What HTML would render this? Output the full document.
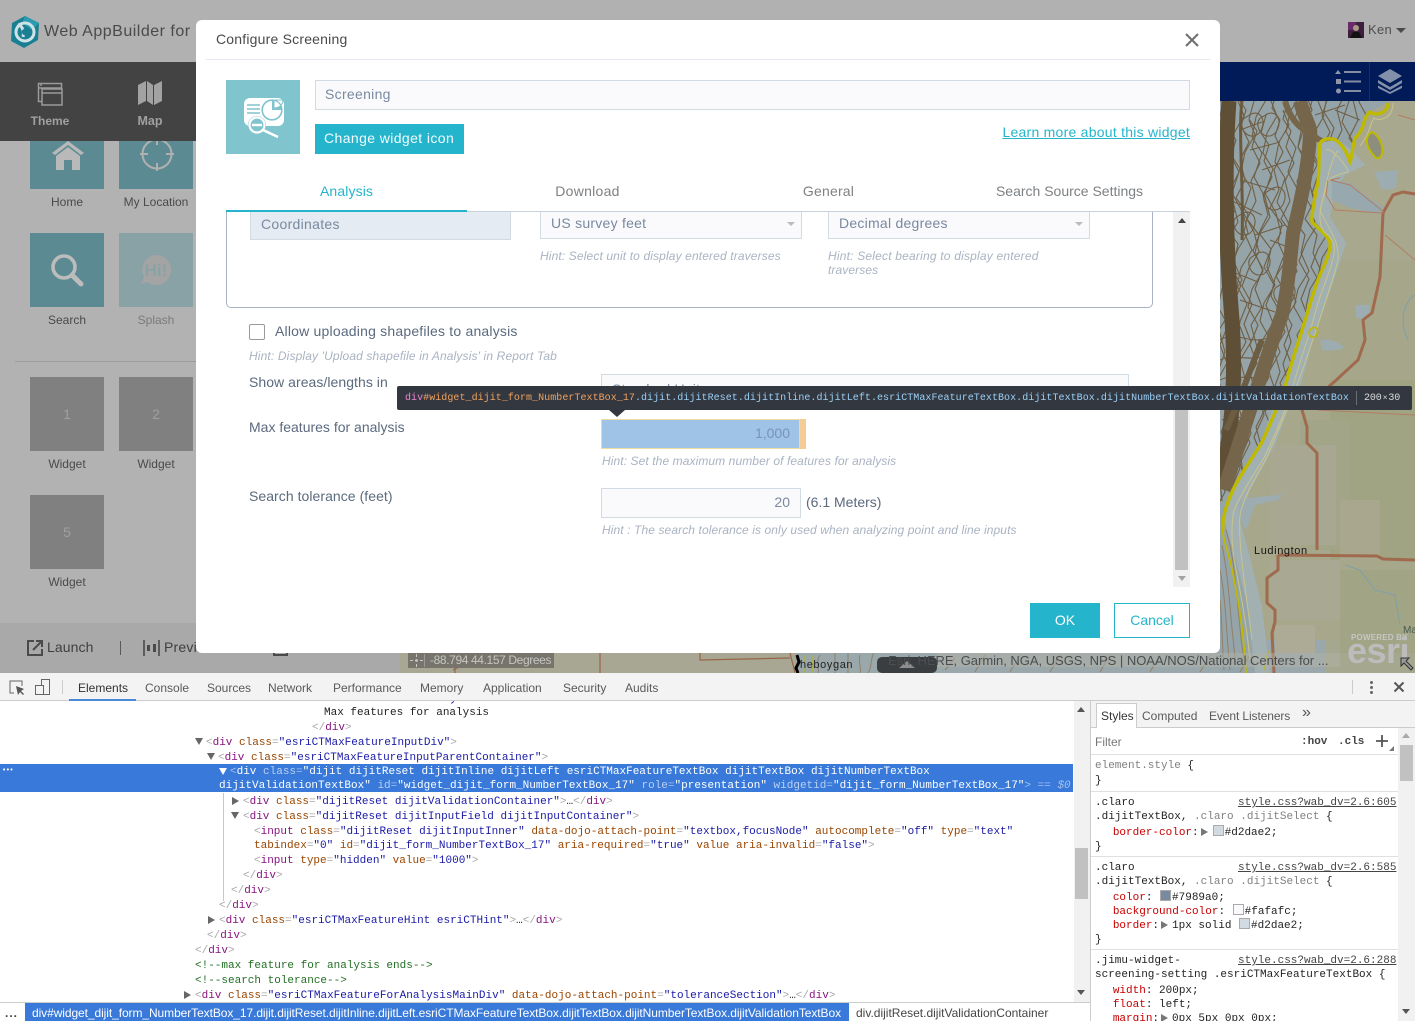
<!DOCTYPE html>
<html><head><meta charset="utf-8"><title>Configure Screening</title>
<style>
html,body{margin:0;padding:0;width:1415px;height:1021px;overflow:hidden;background:#fff;font-family:"Liberation Sans",sans-serif}
.a{position:absolute}
.t{position:absolute;white-space:nowrap;line-height:16px;height:16px}
#page{position:absolute;left:0;top:0;width:1415px;height:1021px;overflow:hidden}
.tile{position:absolute;width:74px;height:74px;display:flex;align-items:center;justify-content:center}
.lb{position:absolute;white-space:nowrap;line-height:16px;font-size:12px;color:#4a4a4a;text-align:center;width:90px}
.d{color:#5b6a7e;font-size:14px;letter-spacing:0}
.h{color:#a9b3c2;font-size:12px;font-style:italic;letter-spacing:.1px}
.box{position:absolute;background:#fafafc;border:1px solid #d2dae2;box-sizing:border-box}
.tab{position:absolute;top:183px;width:241px;text-align:center;font-size:14px;color:#7d8184;line-height:16px;letter-spacing:.2px}
.m{position:absolute;white-space:pre;font-family:"Liberation Mono",monospace;font-size:11px;line-height:15px;height:15px;color:#222;margin-top:2px}
.b{color:#a8a8a8}.g{color:#881280}.n{color:#994500}.v{color:#1a1aa6}.c{color:#236e25}
.sel{color:#fff}.sel .b{color:#a5c1ee}.sel .g{color:#fff}.sel .n{color:#bcd0f0}.sel .v{color:#fff}
.ar{position:absolute;width:0;height:0}
.ad{border-left:4px solid transparent;border-right:4px solid transparent;border-top:7px solid #666;margin-top:1px}
.ag{border-top:4px solid transparent;border-bottom:4px solid transparent;border-left:7px solid #666;margin-top:1px}
.dt{position:absolute;top:680px;font-size:12px;line-height:16px;color:#5a5a5a;white-space:nowrap}
.s{position:absolute;white-space:pre;font-family:"Liberation Mono",monospace;font-size:11px;line-height:14px;height:14px;color:#222;left:1095px;margin-top:2px}
.r{color:#c80000;margin-left:-2px}.gr{color:#808080}
.lk{position:absolute;left:1238px;white-space:pre;font-family:"Liberation Mono",monospace;font-size:11px;line-height:14px;color:#444;text-decoration:underline;margin-top:2px}
.sw{display:inline-block;width:9px;height:9px;border:1px solid #aaa;vertical-align:-1px;margin:0 1px 0 1px}
.tri{display:inline-block;width:0;height:0;border-top:4px solid transparent;border-bottom:4px solid transparent;border-left:7px solid #777;margin:0 4px 0 2px;vertical-align:-1px}
</style></head><body>
<div id="page">

<!-- app header -->
<div class="a" style="left:0;top:0;width:1415px;height:62px;background:#b1b1b1"></div>
<svg class="a" style="left:10px;top:15px" width="30" height="34" viewBox="0 0 30 34">
<path d="M15 1 L29 8 L28 25 L14 33 L1 26 L2 8 Z" fill="#1b7f93"/>
<path d="M15 1 L29 8 L22 15 L12 8 Z" fill="#2a9bb0"/>
<circle cx="15" cy="17" r="9" fill="none" stroke="#cfe3e6" stroke-width="3"/>
<path d="M8 9 Q15 13 13 22" fill="none" stroke="#cfe3e6" stroke-width="3"/>
<circle cx="15" cy="17" r="3.2" fill="#1b7f93"/>
</svg>
<div class="t" style="left:44px;top:23px;font-size:16px;letter-spacing:.5px;color:#4a4a4a;height:18px;line-height:18px">Web AppBuilder for .</div>
<svg class="a" style="left:1348px;top:22px" width="16" height="16"><rect width="16" height="16" fill="#3d1f3d"/><rect x="0" y="0" width="8" height="8" fill="#6a2a6a"/><circle cx="8" cy="6" r="3" fill="#a98"/><path d="M2 16 L5 10 H11 L14 16Z" fill="#111"/></svg>
<div class="t" style="left:1368px;top:22px;font-size:13px;color:#4e4e4e;letter-spacing:.3px">Ken</div>
<div class="ar" style="left:1396px;top:28px;border-left:5px solid transparent;border-right:5px solid transparent;border-top:5px solid #4a4a4a"></div>

<!-- left panel -->
<div class="a" style="left:0;top:62px;width:196px;height:562px;background:#b2b2b2"></div>
<div class="tile" style="left:30px;top:115px;background:#5c8a92"></div>
<div class="tile" style="left:119px;top:115px;background:#5c8a92"></div>
<svg class="a" style="left:50px;top:138px" width="36" height="34"><path d="M18 3 L2 15 L5 17 L18 7 L31 17 L34 15Z" fill="#b9b9b9"/><path d="M6 18 L18 9 L30 18 V32 H22 V22 H14 V32 H6Z" fill="#b9b9b9"/></svg>
<svg class="a" style="left:139px;top:136px" width="36" height="36"><circle cx="18" cy="18" r="14.5" fill="none" stroke="#b0b0b0" stroke-width="2"/><path d="M18 1V9M18 27V35M1 18H9M27 18H35" stroke="#b0b0b0" stroke-width="2"/></svg>
<div class="lb" style="left:22px;top:194px">Home</div>
<div class="lb" style="left:111px;top:194px">My Location</div>
<div class="tile" style="left:30px;top:233px;background:#5c8a92"><svg width="36" height="36" viewBox="0 0 36 36"><circle cx="15" cy="15" r="11" fill="none" stroke="#bcbcbc" stroke-width="3.6"/><path d="M23 23 L32 32" stroke="#bcbcbc" stroke-width="5" stroke-linecap="round"/></svg></div>
<div class="tile" style="left:119px;top:233px;background:#88a2a5"><svg width="36" height="36" viewBox="0 0 36 36"><path d="M18 3a15 15 0 1 1-9 27L3 32l3-7A15 15 0 0 1 18 3Z" fill="#a4a4a4"/><text x="18" y="24" font-size="17" font-weight="bold" text-anchor="middle" fill="#88a2a5" font-family="Liberation Sans">Hi!</text></svg></div>
<div class="lb" style="left:22px;top:312px">Search</div>
<div class="lb" style="left:111px;top:312px;color:#7a7a7a">Splash</div>
<div class="a" style="left:15px;top:361px;width:181px;height:1px;background:#9c9c9c"></div>
<div class="tile" style="left:30px;top:377px;background:#808080;color:#a0a0a0;font-size:14px">1</div>
<div class="tile" style="left:119px;top:377px;background:#808080;color:#a0a0a0;font-size:14px">2</div>
<div class="tile" style="left:30px;top:495px;background:#808080;color:#a0a0a0;font-size:14px">5</div>
<div class="lb" style="left:22px;top:456px">Widget</div>
<div class="lb" style="left:111px;top:456px">Widget</div>
<div class="lb" style="left:22px;top:574px">Widget</div>

<!-- dark bar -->
<div class="a" style="left:0;top:62px;width:196px;height:79px;background:#434343"></div>
<svg class="a" style="left:37px;top:82px" width="26" height="24"><rect x="1.5" y="1.5" width="23" height="18" fill="none" stroke="#9a9a9a" stroke-width="1.5"/><path d="M4 1 V4 M1 6H25" stroke="#9a9a9a" stroke-width="1.5"/><rect x="5" y="7" width="20" height="16" fill="#434343" stroke="#9a9a9a" stroke-width="1.5"/><path d="M5 11H25" stroke="#9a9a9a" stroke-width="1.5"/></svg>
<svg class="a" style="left:137px;top:80px" width="26" height="26"><path d="M1 5 L9 1 V21 L1 25Z M10 1 L16 5 V25 L10 21Z M17 5 L25 1 V21 L17 25Z" fill="#a2a2a2"/></svg>
<div class="t" style="left:10px;top:113px;width:80px;text-align:center;font-size:12px;font-weight:bold;color:#a0a0a0">Theme</div>
<div class="t" style="left:110px;top:113px;width:80px;text-align:center;font-size:12.5px;font-weight:bold;color:#a0a0a0">Map</div>

<!-- bottom bar -->
<div class="a" style="left:0;top:623px;width:400px;height:50px;background:#a9a9a9"></div>
<svg class="a" style="left:26px;top:639px" width="18" height="18"><path d="M8 2H2V16H16V10" fill="none" stroke="#4a4a4a" stroke-width="2"/><path d="M7 11L15 3M10 2H16V8" fill="none" stroke="#4a4a4a" stroke-width="2"/></svg>
<div class="t" style="left:47px;top:639px;font-size:14px;color:#3f3f3f;letter-spacing:.1px">Launch</div>
<div class="a" style="left:120px;top:641px;width:1px;height:14px;background:#5a5a5a"></div>
<svg class="a" style="left:143px;top:640px" width="18" height="16"><path d="M1 0V16M16 0V16" stroke="#4a4a4a" stroke-width="1.6"/><rect x="4" y="5" width="3" height="6" fill="#4a4a4a"/><rect x="10" y="4" width="3" height="8" fill="#4a4a4a"/></svg>
<div class="t" style="left:164px;top:639px;font-size:14px;color:#3f3f3f;letter-spacing:.2px">Preview</div>
<div class="a" style="left:273px;top:648px;width:15px;height:8px;border:2px solid #4a4a4a;box-sizing:border-box"></div>

<!-- navy bar -->
<div class="a" style="left:1220px;top:62px;width:195px;height:39px;background:#001b58"></div>
<svg class="a" style="left:1335px;top:68px" width="30" height="28"><path d="M3 2 L6 6 H0Z" fill="#8f96a9"/><path d="M9 4H26M9 13.500H26M9 23H26" stroke="#858da3" stroke-width="2"/><rect x="1" y="11" width="5" height="5" fill="#8f96a9"/><circle cx="3.500" cy="23" r="2.500" fill="#8f96a9"/></svg>
<div class="a" style="left:1369px;top:62px;width:1px;height:39px;background:#12306b"></div>
<svg class="a" style="left:1377px;top:68px" width="26" height="26"><path d="M13 1 L25 8 L13 15 L1 8Z" fill="#8390a9"/><path d="M1 12 L13 19 L25 12 V15 L13 22 L1 15Z" fill="#8390a9"/><path d="M1 17.500 L13 24 L25 17.500 V20 L13 26 L1 20Z" fill="#8390a9"/></svg>

<!-- map -->
<svg class="a" style="left:400px;top:101px" width="1015" height="572" viewBox="400 101 1015 572">
<defs>
<clipPath id="wz"><path d="M1220 101 H1390 L1370 112 L1352 150 L1337 140 L1320 142 L1318 187 L1313 217 L1331 243 L1320 277 L1300 333 L1283 395 L1272 410 L1260 445 L1233 490 L1222 520 H1220Z"/></clipPath>
<path id="cA" d="M0 0 L-5 18 L3 30 L-2 46 L6 62 L-3 80 L2 100 L-7 118 L5 134 L1 152 L9 170 L-2 188 L-6 206 L4 224 L-4 244 L3 262 L-8 282 L-2 300 L-12 322 L-4 342 L-14 362 L-8 382 L-18 400"/>
<path id="cB" d="M0 0 L6 15 L-4 32 L-8 52 L2 68 L-6 92 L5 112 L10 132 L0 148 L-7 166 L3 184 L-5 204 L2 222 L-9 240 L-3 262 L-11 284 L-5 306 L-15 326 L-9 348 L-19 372 L-16 400"/>
<path id="cC" d="M0 0 C10 -8 18 2 14 12 C10 24 -4 22 -6 10 C-7 4 -4 2 0 0Z"/>
</defs>
<rect x="400" y="101" width="1015" height="572" fill="#a6a78b"/>
<!-- bottom strip left tan -->
<rect x="400" y="640" width="395" height="40" fill="#a8a794"/>
<path d="M455 653 L455 673M453 670Q490 650 530 660M600 653V673M700 653V660L790 658 M790 653L795 673" stroke="#9a6448" stroke-width="1.2" fill="none"/>
<!-- bottom strip water -->
<rect x="795" y="640" width="530" height="40" fill="#9aa8ab"/>
<rect x="1325" y="640" width="90" height="40" fill="#a6a78f"/>
<!-- land patches -->
<rect x="1330" y="101" width="85" height="160" fill="#a8a88f"/>
<rect x="1330" y="260" width="85" height="120" fill="#a6a78a"/>
<rect x="1330" y="380" width="85" height="180" fill="#a0a483"/>
<rect x="1300" y="420" width="50" height="130" fill="#a3a589"/>
<rect x="1270" y="445" width="66" height="100" fill="#a8a892"/>
<rect x="1340" y="500" width="40" height="60" fill="#a9a88f"/>
<rect x="1270" y="560" width="70" height="60" fill="#a9a893"/>
<rect x="1340" y="570" width="75" height="83" fill="#a1a585"/>
<rect x="1275" y="625" width="40" height="28" fill="#adab96"/>
<!-- water west of shoreline -->
<path d="M1220 101 H1390 L1370 112 L1352 150 L1337 140 L1320 142 L1318 187 L1313 217 L1331 243 L1320 277 L1300 333 L1283 395 L1272 410 L1260 445 L1233 490 L1224 520 L1235 557 L1248 607 L1255 673 H1220Z" fill="#95a4a9"/>
<path d="M1352 150 L1337 140 L1320 142 L1318 187 L1313 217 L1331 243 L1320 277 L1300 333 L1283 395 L1272 410 L1260 445 L1233 490 L1224 520 L1235 557 L1248 607 L1255 673 L1270 673 L1262 607 L1250 557 L1240 520 L1250 490 L1275 445 L1288 410 L1298 395 L1315 333 L1335 277 L1346 243 L1330 217 L1335 190 L1345 175 L1365 165Z" fill="#a2b0b2"/>
<!-- lakes -->
<path d="M1332 180 L1350 183 L1372 200 L1384 208 L1378 214 L1350 208 L1332 200Z" fill="#97a8ae"/>
<path d="M1374 172 L1398 170 L1396 188 L1382 190Z" fill="#9cacb1"/>
<path d="M1240 500 L1255 497 L1280 495 L1285 490 L1278 500 L1255 505 L1248 525 L1246 530 L1238 515Z" fill="#9cacb1"/>
<path d="M1355 305 L1370 305 L1368 320 L1356 318Z" fill="#9cacb1"/>
<path d="M1320 340 Q1335 338 1345 348 Q1332 352 1322 350Z" fill="#9cacb1"/>
<!-- dense contours -->
<g clip-path="url(#wz)" fill="none" stroke="#6f5f44" stroke-width="1.1" stroke-linejoin="round">
<use href="#cA" x="1224" y="101"/><use href="#cB" x="1228" y="90"/><use href="#cA" x="1233" y="110"/><use href="#cB" x="1238" y="101"/>
<use href="#cA" x="1243" y="80"/><use href="#cB" x="1249" y="120"/><use href="#cA" x="1254" y="101"/><use href="#cB" x="1260" y="85"/>
<use href="#cA" x="1266" y="115"/><use href="#cB" x="1271" y="101"/><use href="#cA" x="1277" y="90"/><use href="#cB" x="1283" y="110"/>
<use href="#cA" x="1288" y="101"/><use href="#cB" x="1294" y="80"/><use href="#cA" x="1300" y="101"/><use href="#cB" x="1306" y="95"/>
<use href="#cA" x="1312" y="101"/><use href="#cB" x="1318" y="101"/><use href="#cA" x="1324" y="70"/><use href="#cB" x="1332" y="60"/>
<use href="#cA" x="1340" y="30"/><use href="#cB" x="1348" y="30"/><use href="#cA" x="1356" y="20"/><use href="#cB" x="1365" y="10"/>
<path d="M1220 340 C1235 330 1250 345 1268 338 M1220 360 C1240 352 1252 365 1272 352 M1220 380 C1236 372 1255 384 1270 372 M1220 400 C1238 392 1248 404 1262 392 M1222 420 C1238 412 1246 424 1256 412 M1222 440 L1248 428 M1222 460 L1240 450 M1240 130 L1262 122 M1262 170 L1290 160 M1230 200 L1262 215 M1270 240 L1295 250 M1228 270 L1258 282 M1335 110 L1360 120 M1315 115 L1345 105 M1250 150 L1280 142 M1240 180 L1275 190 M1255 235 L1285 225 M1240 300 L1275 312"/>
<use href="#cC" x="1248" y="116"/><use href="#cC" x="1264" y="116"/><use href="#cC" x="1270" y="190"/><use href="#cC" x="1255" y="255"/><use href="#cC" x="1240" y="215"/><use href="#cC" x="1280" y="285"/>
</g>
<!-- thick brown bands -->
<g clip-path="url(#wz)" fill="none">
<path d="M1229 101 C1224 170 1226 250 1232 320 C1236 380 1232 430 1222 480" stroke="#5f4f37" stroke-width="15"/>
<path d="M1242 101 C1238 130 1244 190 1242 240" stroke="#6a5a40" stroke-width="3"/>
<path d="M1300 101 C1305 120 1312 128 1310 135 C1308 170 1300 205 1293 233 C1290 260 1288 290 1282 315 C1270 345 1262 375 1250 410 C1240 440 1232 465 1224 490" stroke="#75654a" stroke-width="14"/>
<path d="M1285 101 C1292 125 1304 130 1314 136 C1328 148 1340 142 1350 160" stroke="#76664a" stroke-width="6"/>
<path d="M1262 340 C1250 370 1240 400 1226 430" stroke="#6d5d42" stroke-width="6"/>
</g>
<g fill="none" stroke="#90806a" stroke-width="1">
<path d="M1226 530 C1238 570 1236 610 1244 660 M1222 545 C1230 585 1230 620 1236 665 M1220 570 C1226 600 1226 630 1230 670 M1220 600 C1222 620 1222 640 1224 670"/>
<path d="M820 655 C815 662 820 668 818 673 M835 653 V673 M848 653 V673 M860 655 C858 665 862 668 860 673 M874 652 C870 660 872 668 868 673"/>
<path d="M945 670 L955 658 M975 672 L985 655 M1010 672 L1020 655 M1050 672 L1060 655 M1100 672 L1110 655 M1150 672 L1160 655 M1200 672 L1210 655 M1240 672 L1250 655"/>
</g>
<!-- shoreline yellow -->
<g fill="none">
<path d="M1388 103 C1388 114 1375 116 1370 112 C1362 118 1366 128 1355 138 C1352 148 1352 158 1350 162 C1346 150 1342 145 1336 140 C1330 138 1324 138 1320 143 C1318 165 1320 180 1316 190 C1314 205 1311 215 1312 222 C1322 232 1331 238 1330 246 C1328 262 1320 272 1318 280 C1312 296 1308 312 1302 330 C1296 350 1288 372 1284 392 C1276 410 1272 420 1262 442 C1250 462 1238 478 1232 492 C1226 505 1222 520 1223 530" stroke="#bfb900" stroke-width="3.4"/>
<path d="M1393 103 C1393 118 1380 122 1374 118 C1368 128 1372 130 1360 146 M1326 150 C1330 145 1350 170 1348 172 C1330 176 1326 180 1325 192 C1320 208 1317 222 1324 232 C1336 240 1336 250 1332 262 C1328 278 1322 288 1316 310 C1308 340 1300 360 1292 390 C1284 415 1276 432 1264 458 C1250 480 1240 496 1234 510 C1230 530 1232 550 1236 570 C1240 590 1246 620 1250 660" stroke="#c9c58a" stroke-width="1"/>
<path d="M1338 150 C1328 165 1326 190 1320 210 C1326 225 1340 240 1338 260 C1332 285 1316 330 1306 360 C1298 385 1280 425 1268 455 C1256 478 1244 495 1240 515 C1238 540 1244 580 1252 640" stroke="#c9c58a" stroke-width="1"/>
<path d="M1222 530 C1226 550 1232 562 1236 590 C1240 610 1244 640 1246 673" stroke="#bfb900" stroke-width="1.8"/>
<path d="M1372 132 C1362 138 1368 150 1376 158 C1386 160 1384 138 1372 132Z" stroke="#bfb900" stroke-width="2" fill="#8d8f7c"/>
<path d="M1312 328 C1306 332 1310 340 1316 336 C1320 330 1316 326 1312 328Z" stroke="#bfb900" stroke-width="1.6"/>
<path d="M1270 650 C1264 660 1264 668 1266 673" stroke="#bfb900" stroke-width="1"/>
</g>
<path d="M805 655 V673 M812 655 V673" stroke="#b7b200" stroke-width="1"/>
<!-- roads -->
<g fill="none" stroke="#a06a4e" stroke-linejoin="round">
<path d="M1415 194 L1403 192 L1393 195 L1383 213 L1380 277 L1372 313 L1363 320 L1365 340 L1358 360 L1333 383 L1302 410 L1307 427 L1307 443 L1317 453 L1317 550 M1278 555 L1377 556 L1383 559 L1415 560 M1278 555 V570 L1267 578 V603 L1275 610 V622 L1272 633 L1274 673" stroke-width="3"/>
<path d="M1330 180 L1350 185 L1384 212 M1328 180 L1326 195 L1335 210 L1383 213 M1398 115 L1415 120 M1385 235 L1415 260 M1330 180 L1340 178" stroke="#b37d62" stroke-width="1"/>
<path d="M1318 410 L1415 415" stroke="#b37d62" stroke-width="1"/>
</g>
<path d="M1345 565 L1360 570 L1375 590 L1395 595 L1400 625" fill="none" stroke="#7e9fa9" stroke-width="1"/>
<path d="M1415 295 C1405 300 1398 320 1408 340" fill="none" stroke="#7e9fa9" stroke-width="1"/>
<!-- label -->
<text x="1254" y="554" font-size="11" letter-spacing=".6" fill="#151515" font-family="Liberation Sans">Ludington</text>
<path d="M797 655 L799 662 L796 668 L798 673" stroke="#000" stroke-width="3" fill="none"/>
<text x="800" y="668" font-size="11" letter-spacing=".6" fill="#222" font-family="Liberation Sans">heboygan</text>
<text x="1403" y="633" font-size="10" fill="#4c5c50" font-family="Liberation Sans">Ma</text>
<!-- attribution -->
<rect x="877" y="657" width="60" height="16" rx="5" fill="#3a3e41"/>
<path d="M899 668 L907 661 L915 668Z" fill="#8d8d8d"/>
<rect x="937" y="653" width="403" height="14" fill="#b2b2a8" opacity=".5"/>
</svg>
<div class="t" style="left:888px;top:653px;font-size:13px;color:#4b4d50;letter-spacing:-.02px">Esri, HERE, Garmin, NGA, USGS, NPS | NOAA/NOS/National Centers for ...</div>
<div class="t" style="left:1351px;top:630px;font-size:8px;font-weight:bold;color:#c6c6c6;letter-spacing:.2px">POWERED BY</div>
<div class="t" style="left:1347px;top:633px;font-size:36px;font-weight:bold;color:#bcbcbc;line-height:36px;height:36px;letter-spacing:-.5px">esri</div>
<svg class="a" style="left:1400px;top:657px" width="14" height="14"><path d="M1 1 H9 L6 4 L13 11 L11 13 L4 6 L1 9Z" fill="#999" stroke="#333" stroke-width="1"/></svg>
<div class="a" style="left:408px;top:653px;width:146px;height:15px;background:#77756b"></div>
<div class="a" style="left:424px;top:654px;width:1px;height:13px;background:#999"></div>
<svg class="a" style="left:410px;top:654px" width="13" height="13"><circle cx="6.500" cy="6.500" r="1.400" fill="#c9c9c9"/><path d="M6.500 0V3M6.500 10V13M0 6.500H3M10 6.500H13" stroke="#c9c9c9"/></svg>
<div class="t" style="left:430px;top:652px;font-size:12px;color:#c6c6c2;letter-spacing:-.38px">-88.794 44.157 Degrees</div>

<!-- Dialog -->
<div class="a" style="left:196px;top:20px;width:1024px;height:633px;background:#fff;border-radius:6px"></div>
<div class="t" style="left:216px;top:31px;font-size:14px;color:#4a4a4a;letter-spacing:.2px">Configure Screening</div>
<div class="a" style="left:206px;top:59px;width:1004px;height:1px;background:#e3e8ee"></div>
<svg class="a" style="left:1184px;top:32px" width="16" height="16"><path d="M2 2L14 14M14 2L2 14" stroke="#6e6e6e" stroke-width="2"/></svg>

<div class="a" style="left:226px;top:80px;width:74px;height:74px;background:#80c4ce"></div>
<svg class="a" style="left:226px;top:80px" width="74" height="74">
<rect x="18" y="18" width="40" height="28" rx="6" fill="#fff"/>
<circle cx="46" cy="30" r="10.500" fill="#80c4ce" stroke="#fff" stroke-width="0"/>
<path d="M46 21a9 9 0 1 0 9 9h-9Z" fill="#fff"/><path d="M48 20h9c0 5-4 8-9 8Z" fill="#fff" stroke="#80c4ce" stroke-width="1"/>
<circle cx="46" cy="30" r="10" fill="none" stroke="#80c4ce" stroke-width="1.200"/>
<path d="M21 25H34M21 29H34M21 33H34" stroke="#80c4ce" stroke-width="1.500"/>
<circle cx="31" cy="45" r="9" fill="#80c4ce"/><circle cx="31" cy="45" r="7.500" fill="#80c4ce" stroke="#fff" stroke-width="2.200"/>
<path d="M26 45H36" stroke="#fff" stroke-width="2.400"/>
<path d="M37 50L52 57" stroke="#fff" stroke-width="2.600"/>
</svg>
<div class="box" style="left:315px;top:80px;width:875px;height:30px"></div>
<div class="t" style="left:325px;top:86px;font-size:14px;color:#7989a0;letter-spacing:.3px">Screening</div>
<div class="a" style="left:315px;top:124px;width:149px;height:30px;background:#24b5cc"></div>
<div class="t" style="left:324px;top:130px;font-size:14px;color:#f3fbfc;letter-spacing:.4px">Change widget icon</div>
<div class="t" style="left:990px;top:124px;font-size:14px;color:#24b5cc;letter-spacing:.25px;width:200px;text-align:right"><span style="text-decoration:underline">Learn more about this widget</span></div>

<div class="tab" style="left:226px;color:#24b5cc;letter-spacing:.12px">Analysis</div>
<div class="tab" style="left:467px;letter-spacing:.28px">Download</div>
<div class="tab" style="left:708px">General</div>
<div class="tab" style="left:949px;letter-spacing:0">Search Source Settings</div>
<div class="a" style="left:467px;top:211px;width:723px;height:1px;background:#ccd2da"></div>
<div class="a" style="left:226px;top:210px;width:241px;height:2px;background:#24b5cc"></div>

<!-- scroll content -->
<div class="a" style="left:226px;top:212px;width:927px;height:96px;box-sizing:border-box;border:1px solid #a8b4c6;border-top:0;border-radius:0 0 5px 5px"></div>
<div class="a" style="left:250px;top:212px;width:261px;height:28px;background:#e5ebf2;box-sizing:border-box;border:1px solid #d2dae2;border-top:0"></div>
<div class="t" style="left:261px;top:216px;font-size:14px;color:#7989a0;letter-spacing:.3px">Coordinates</div>
<div class="box" style="left:540px;top:212px;width:262px;height:27px;border-top:0"></div>
<div class="t" style="left:551px;top:215px;font-size:14px;color:#7989a0;letter-spacing:.25px">US survey feet</div>
<div class="ar" style="left:787px;top:222px;border-left:4px solid transparent;border-right:4px solid transparent;border-top:4px solid #bbb"></div>
<div class="box" style="left:828px;top:212px;width:262px;height:27px;border-top:0"></div>
<div class="t" style="left:839px;top:215px;font-size:14px;color:#7989a0;letter-spacing:.25px">Decimal degrees</div>
<div class="ar" style="left:1075px;top:222px;border-left:4px solid transparent;border-right:4px solid transparent;border-top:4px solid #bbb"></div>
<div class="t h" style="left:540px;top:248px;letter-spacing:.13px">Hint: Select unit to display entered traverses</div>
<div class="t h" style="left:828px;top:248px;letter-spacing:.2px">Hint: Select bearing to display entered</div>
<div class="t h" style="left:828px;top:262px;letter-spacing:.1px">traverses</div>

<div class="a" style="left:249px;top:324px;width:16px;height:16px;box-sizing:border-box;border:1px solid #9a9a9a;border-radius:2px;background:#fff"></div>
<div class="t d" style="left:275px;top:323px;letter-spacing:.2px">Allow uploading shapefiles to analysis</div>
<div class="t h" style="left:249px;top:348px;letter-spacing:.14px">Hint: Display 'Upload shapefile in Analysis' in Report Tab</div>
<div class="t d" style="left:249px;top:374px;letter-spacing:.05px">Show areas/lengths in</div>
<div class="box" style="left:601px;top:374px;width:528px;height:30px"></div>
<div class="t" style="left:612px;top:381px;font-size:14px;color:#7989a0;letter-spacing:.2px">Standard Units</div>
<div class="t d" style="left:249px;top:419px">Max features for analysis</div>
<div class="a" style="left:601px;top:419px;width:199px;height:30px;box-sizing:border-box;border:1px solid #f0dca0;background:#9fc2e7"></div>
<div class="a" style="left:800px;top:419px;width:6px;height:30px;background:#f6cc96"></div>
<div class="t" style="left:740px;top:425px;width:50px;text-align:right;font-size:14px;color:#7894b8">1,000</div>
<div class="t h" style="left:602px;top:453px;letter-spacing:.09px">Hint: Set the maximum number of features for analysis</div>
<div class="t d" style="left:249px;top:488px;letter-spacing:.05px">Search tolerance (feet)</div>
<div class="box" style="left:601px;top:488px;width:200px;height:30px"></div>
<div class="t" style="left:740px;top:494px;width:50px;text-align:right;font-size:14px;color:#7989a0">20</div>
<div class="t d" style="left:806px;top:494px">(6.1 Meters)</div>
<div class="t h" style="left:602px;top:522px;letter-spacing:.1px">Hint : The search tolerance is only used when analyzing point and line inputs</div>

<div class="a" style="left:1173px;top:212px;width:17px;height:375px;background:#f1f1f1"></div>
<div class="a" style="left:1175px;top:405px;width:13px;height:165px;background:#c1c1c1"></div>
<div class="ar" style="left:1178px;top:218px;border-left:4px solid transparent;border-right:4px solid transparent;border-bottom:5px solid #444"></div>
<div class="ar" style="left:1178px;top:576px;border-left:4px solid transparent;border-right:4px solid transparent;border-top:5px solid #a3a3a3"></div>

<div class="a" style="left:1030px;top:603px;width:70px;height:35px;background:#24b5cc;color:#fff;font-size:14px;line-height:35px;text-align:center">OK</div>
<div class="a" style="left:1114px;top:603px;width:76px;height:35px;box-sizing:border-box;border:1px solid #24b5cc;color:#24b5cc;font-size:14px;line-height:33px;text-align:center">Cancel</div>

<!-- tooltip -->
<div class="a" style="left:397px;top:386px;width:1015px;height:24px;background:#333740;border-radius:2px"></div>
<div class="ar" style="left:609px;top:410px;border-left:8px solid transparent;border-right:8px solid transparent;border-top:7px solid #333740"></div>
<div class="t" style="left:405px;top:390px;height:18px;line-height:18px;font-family:'Liberation Mono',monospace;font-size:10px;letter-spacing:.05px;color:#9ad0f5"><span style="color:#ee82cf">div</span><span style="color:#f0a25f">#widget_dijit_form_NumberTextBox_17</span>.dijit.dijitReset.dijitInline.dijitLeft.esriCTMaxFeatureTextBox.dijitTextBox.dijitNumberTextBox.dijitValidationTextBox</div>
<div class="a" style="left:1356px;top:391px;width:1px;height:14px;background:#6a6e76"></div>
<div class="t" style="left:1364px;top:390px;height:18px;line-height:18px;font-family:'Liberation Mono',monospace;font-size:10px;color:#dcdcdc;letter-spacing:-.1px">200<span style="font-size:8px;margin:0 1px">×</span>30</div>

<!-- DevTools toolbar -->
<div class="a" style="left:0;top:673px;width:1415px;height:27px;background:#f3f3f3;border-bottom:1px solid #ccc"></div>
<svg class="a" style="left:9px;top:680px" width="16" height="16"><path d="M7 1H1V13H5" fill="none" stroke="#666"/><path d="M1 1H13V6" fill="none" stroke="#666"/><path d="M7 6L15 9L12 11L15 14L14 15L11 12L9 15Z" fill="#555"/></svg>
<svg class="a" style="left:35px;top:679px" width="16" height="17"><rect x="6.500" y="0.500" width="8" height="15" fill="none" stroke="#666"/><rect x="0.500" y="6.500" width="8" height="9" fill="#f3f3f3" stroke="#666"/></svg>
<div class="a" style="left:62px;top:680px;width:1px;height:14px;background:#ccc"></div>
<div class="dt" style="left:78px;color:#333">Elements</div>
<div class="dt" style="left:145px">Console</div>
<div class="dt" style="left:207px">Sources</div>
<div class="dt" style="left:268px">Network</div>
<div class="dt" style="left:333px">Performance</div>
<div class="dt" style="left:420px">Memory</div>
<div class="dt" style="left:483px">Application</div>
<div class="dt" style="left:563px">Security</div>
<div class="dt" style="left:625px">Audits</div>
<div class="a" style="left:69px;top:699px;width:67px;height:2px;background:#4b8ad8"></div>
<div class="a" style="left:1352px;top:680px;width:1px;height:14px;background:#ccc"></div>
<svg class="a" style="left:1369px;top:680px" width="5" height="15"><circle cx="2.500" cy="2.500" r="1.500" fill="#666"/><circle cx="2.500" cy="7.500" r="1.500" fill="#666"/><circle cx="2.500" cy="12.500" r="1.500" fill="#666"/></svg>
<svg class="a" style="left:1393px;top:681px" width="12" height="12"><path d="M1.500 1.500L10.500 10.500M10.500 1.500L1.500 10.500" stroke="#555" stroke-width="2"/></svg>

<!-- Elements panel -->
<div class="a" style="left:0;top:701px;width:1073px;height:302px;overflow:hidden">
<div class="m" style="left:219px;top:-11px"><span class="b">&lt;</span><span class="g">div</span> <span class="n">class</span><span class="b">=</span><span class="v">"esriCTMaxFeatureForAnalysisLabel"</span><span class="b">&gt;</span></div>
<div class="m" style="left:324px;top:3px">Max features for analysis</div>
<div class="m" style="left:312px;top:18px"><span class="b">&lt;/</span><span class="g">div</span><span class="b">&gt;</span></div>
<div class="m" style="left:206px;top:33px"><span class="b">&lt;</span><span class="g">div</span> <span class="n">class</span><span class="b">=</span><span class="v">"esriCTMaxFeatureInputDiv"</span><span class="b">&gt;</span></div>
<div class="m" style="left:218px;top:48px"><span class="b">&lt;</span><span class="g">div</span> <span class="n">class</span><span class="b">=</span><span class="v">"esriCTMaxFeatureInputParentContainer"</span><span class="b">&gt;</span></div>
<div class="a" style="left:0;top:63px;width:1073px;height:28px;background:#3879d9"></div>
<div class="m sel" style="left:2px;top:61px;font-weight:bold;font-size:7px;letter-spacing:-.5px">•••</div>
<div class="m sel" style="left:230px;top:62px"><span class="b">&lt;</span><span class="g">div</span> <span class="n">class</span><span class="b">=</span><span class="v">"dijit dijitReset dijitInline dijitLeft esriCTMaxFeatureTextBox dijitTextBox dijitNumberTextBox</span></div>
<div class="m sel" style="left:219px;top:76px"><span class="v">dijitValidationTextBox"</span> <span class="n">id</span><span class="b">=</span><span class="v">"widget_dijit_form_NumberTextBox_17"</span> <span class="n">role</span><span class="b">=</span><span class="v">"presentation"</span> <span class="n">widgetid</span><span class="b">=</span><span class="v">"dijit_form_NumberTextBox_17"</span><span class="b">&gt;</span> <span class="b">== </span><span class="b" style="font-style:italic">$0</span></div>
<div class="m" style="left:243px;top:92px"><span class="b">&lt;</span><span class="g">div</span> <span class="n">class</span><span class="b">=</span><span class="v">"dijitReset dijitValidationContainer"</span><span class="b">&gt;</span>…<span class="b">&lt;/</span><span class="g">div</span><span class="b">&gt;</span></div>
<div class="m" style="left:243px;top:107px"><span class="b">&lt;</span><span class="g">div</span> <span class="n">class</span><span class="b">=</span><span class="v">"dijitReset dijitInputField dijitInputContainer"</span><span class="b">&gt;</span></div>
<div class="m" style="left:254px;top:122px"><span class="b">&lt;</span><span class="g">input</span> <span class="n">class</span><span class="b">=</span><span class="v">"dijitReset dijitInputInner"</span> <span class="n">data-dojo-attach-point</span><span class="b">=</span><span class="v">"textbox,focusNode"</span> <span class="n">autocomplete</span><span class="b">=</span><span class="v">"off"</span> <span class="n">type</span><span class="b">=</span><span class="v">"text"</span></div>
<div class="m" style="left:254px;top:136px"><span class="n">tabindex</span><span class="b">=</span><span class="v">"0"</span> <span class="n">id</span><span class="b">=</span><span class="v">"dijit_form_NumberTextBox_17"</span> <span class="n">aria-required</span><span class="b">=</span><span class="v">"true"</span> <span class="n">value</span> <span class="n">aria-invalid</span><span class="b">=</span><span class="v">"false"</span><span class="b">&gt;</span></div>
<div class="m" style="left:254px;top:151px"><span class="b">&lt;</span><span class="g">input</span> <span class="n">type</span><span class="b">=</span><span class="v">"hidden"</span> <span class="n">value</span><span class="b">=</span><span class="v">"1000"</span><span class="b">&gt;</span></div>
<div class="m" style="left:243px;top:166px"><span class="b">&lt;/</span><span class="g">div</span><span class="b">&gt;</span></div>
<div class="m" style="left:231px;top:181px"><span class="b">&lt;/</span><span class="g">div</span><span class="b">&gt;</span></div>
<div class="m" style="left:219px;top:196px"><span class="b">&lt;/</span><span class="g">div</span><span class="b">&gt;</span></div>
<div class="m" style="left:219px;top:211px"><span class="b">&lt;</span><span class="g">div</span> <span class="n">class</span><span class="b">=</span><span class="v">"esriCTMaxFeatureHint esriCTHint"</span><span class="b">&gt;</span>…<span class="b">&lt;/</span><span class="g">div</span><span class="b">&gt;</span></div>
<div class="m" style="left:207px;top:226px"><span class="b">&lt;/</span><span class="g">div</span><span class="b">&gt;</span></div>
<div class="m" style="left:195px;top:241px"><span class="b">&lt;/</span><span class="g">div</span><span class="b">&gt;</span></div>
<div class="m c" style="left:195px;top:256px">&lt;!--max feature for analysis ends--&gt;</div>
<div class="m c" style="left:195px;top:271px">&lt;!--search tolerance--&gt;</div>
<div class="m" style="left:195px;top:286px"><span class="b">&lt;</span><span class="g">div</span> <span class="n">class</span><span class="b">=</span><span class="v">"esriCTMaxFeatureForAnalysisMainDiv"</span> <span class="n">data-dojo-attach-point</span><span class="b">=</span><span class="v">"toleranceSection"</span><span class="b">&gt;</span>…<span class="b">&lt;/</span><span class="g">div</span><span class="b">&gt;</span></div>
<div class="a" style="left:223px;top:92px;width:1px;height:108px;background:#b8c9ea"></div>
<div class="ar ad" style="left:195px;top:36px"></div>
<div class="ar ad" style="left:207px;top:51px"></div>
<div class="ar ad" style="left:219px;top:66px;border-top-color:#fff"></div>
<div class="ar ag" style="left:232px;top:95px"></div>
<div class="ar ad" style="left:231px;top:110px"></div>
<div class="ar ag" style="left:208px;top:214px"></div>
<div class="ar ag" style="left:184px;top:289px"></div>
</div>
<div class="a" style="left:1074px;top:701px;width:16px;height:302px;background:#f1f1f1"></div>
<div class="a" style="left:1075px;top:848px;width:13px;height:51px;background:#c1c1c1"></div>
<div class="ar" style="left:1077px;top:707px;border-left:4px solid transparent;border-right:4px solid transparent;border-bottom:5px solid #555"></div>
<div class="ar" style="left:1077px;top:990px;border-left:4px solid transparent;border-right:4px solid transparent;border-top:5px solid #555"></div>
<div class="a" style="left:1090px;top:701px;width:1px;height:320px;background:#ccc"></div>

<!-- breadcrumb -->
<div class="a" style="left:0;top:1002px;width:1090px;height:1px;background:#ccc"></div>
<div class="t" style="left:5px;top:1005px;font-size:12px;color:#444;font-weight:bold;letter-spacing:1px">...</div>
<div class="a" style="left:25px;top:1003px;width:824px;height:18px;background:#3879d9"></div>
<div class="t" style="left:32px;top:1005px;width:815px;overflow:hidden;font-size:12px;letter-spacing:-.08px;color:#fff">div#widget_dijit_form_NumberTextBox_17.dijit.dijitReset.dijitInline.dijitLeft.esriCTMaxFeatureTextBox.dijitTextBox.dijitNumberTextBox.dijitValidationTextBox</div>
<div class="t" style="left:856px;top:1005px;font-size:12px;letter-spacing:0;color:#444">div.dijitReset.dijitValidationContainer</div>

<!-- Styles pane -->
<div class="a" style="left:1091px;top:701px;width:324px;height:27px;background:#f3f3f3;border-bottom:1px solid #ccc;box-sizing:border-box"></div>
<div class="a" style="left:1096px;top:703px;width:41px;height:25px;background:#fff;border:1px solid #ccc;border-bottom:0;box-sizing:border-box"></div>
<div class="dt" style="left:1101px;top:708px;color:#333">Styles</div>
<div class="dt" style="left:1142px;top:708px">Computed</div>
<div class="dt" style="left:1209px;top:708px;letter-spacing:-.1px">Event Listeners</div>
<div class="dt" style="left:1302px;top:705px;font-size:16px;color:#555">»</div>
<div class="t" style="left:1095px;top:734px;font-size:12px;color:#777">Filter</div>
<div class="s" style="left:1301px;top:733px;color:#444;font-weight:bold">:hov</div>
<div class="s" style="left:1338px;top:733px;color:#444;font-weight:bold">.cls</div>
<svg class="a" style="left:1376px;top:735px" width="18" height="16"><path d="M6 0V12M0 6H12" stroke="#555" stroke-width="1.800"/><path d="M18 11V16H13Z" fill="#777"/></svg>
<div class="a" style="left:1091px;top:754px;width:307px;height:1px;background:#e0e0e0"></div>
<div class="s" style="top:757px"><span class="gr">element.style</span> {</div>
<div class="s" style="top:772px">}</div>
<div class="a" style="left:1091px;top:791px;width:307px;height:1px;background:#e0e0e0"></div>
<div class="s" style="top:794px">.claro</div>
<div class="lk" style="top:794px">style.css?wab_dv=2.6:605</div>
<div class="s" style="top:808px">.dijitTextBox, <span class="gr">.claro .dijitSelect</span> {</div>
<div class="s" style="top:823px">   <span class="r">border-color</span>:<span class="tri"></span><span class="sw" style="background:#d2dae2"></span>#d2dae2;</div>
<div class="s" style="top:838px">}</div>
<div class="a" style="left:1091px;top:856px;width:307px;height:1px;background:#e0e0e0"></div>
<div class="s" style="top:859px">.claro</div>
<div class="lk" style="top:859px">style.css?wab_dv=2.6:585</div>
<div class="s" style="top:873px">.dijitTextBox, <span class="gr">.claro .dijitSelect</span> {</div>
<div class="s" style="top:888px">   <span class="r">color</span>: <span class="sw" style="background:#7989a0"></span>#7989a0;</div>
<div class="s" style="top:902px">   <span class="r">background-color</span>: <span class="sw" style="background:#fafafc"></span>#fafafc;</div>
<div class="s" style="top:916px">   <span class="r">border</span>:<span class="tri"></span>1px solid <span class="sw" style="background:#d2dae2"></span>#d2dae2;</div>
<div class="s" style="top:931px">}</div>
<div class="a" style="left:1091px;top:949px;width:307px;height:1px;background:#e0e0e0"></div>
<div class="s" style="top:952px">.jimu-widget-</div>
<div class="lk" style="top:952px">style.css?wab_dv=2.6:288</div>
<div class="s" style="top:966px">screening-setting .esriCTMaxFeatureTextBox {</div>
<div class="s" style="top:982px">   <span class="r">width</span>: 200px;</div>
<div class="s" style="top:996px">   <span class="r">float</span>: left;</div>
<div class="s" style="top:1010px">   <span class="r">margin</span>:<span class="tri"></span>0px 5px 0px 0px;</div>
<div class="a" style="left:1398px;top:728px;width:17px;height:293px;background:#f1f1f1"></div>
<div class="a" style="left:1400px;top:745px;width:13px;height:36px;background:#c1c1c1"></div>
<div class="ar" style="left:1402px;top:733px;border-left:4px solid transparent;border-right:4px solid transparent;border-bottom:5px solid #aaa"></div>
<div class="ar" style="left:1402px;top:1009px;border-left:4px solid transparent;border-right:4px solid transparent;border-top:5px solid #555"></div>
</div>
</body></html>
